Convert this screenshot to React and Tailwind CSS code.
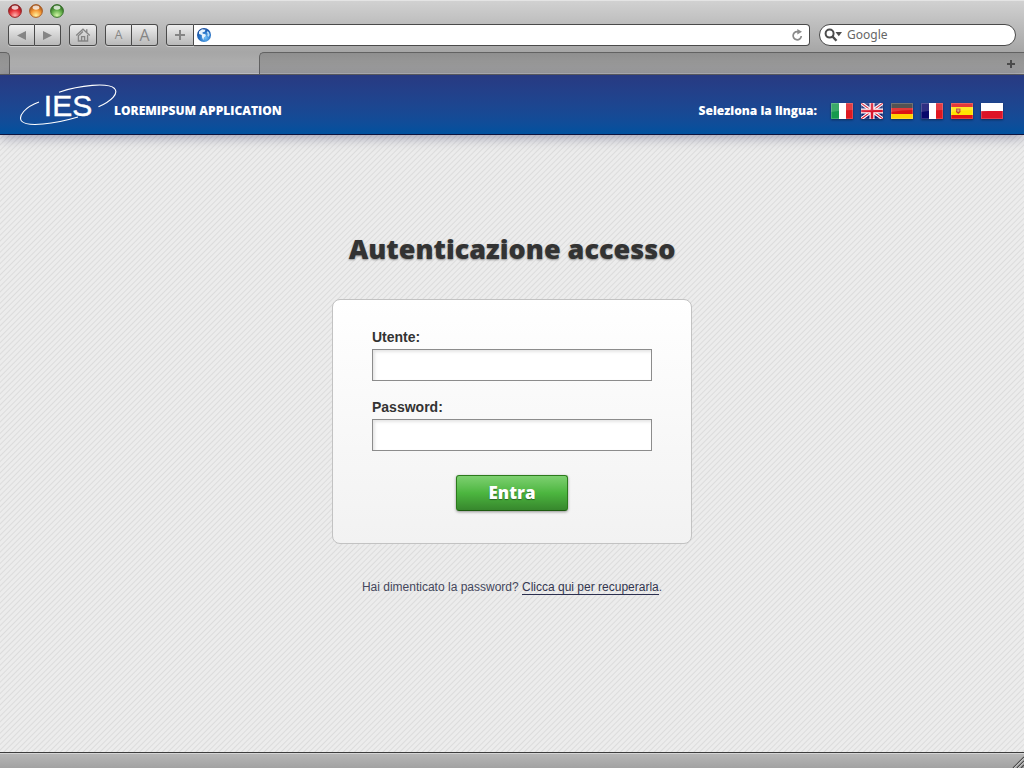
import React from "react";

const toolButton =
  "flex h-[22px] items-center justify-center border border-[#4a4a4a] bg-linear-to-b from-[#eeeeee] to-[#b9b9b9] text-[#858585] shadow-[0_1px_0_rgba(255,255,255,0.4)]";

function WindowButton({ label, id, dark, mid, light }) {
  return (
    <button type="button" aria-label={label} className="size-[14px]">
      <svg viewBox="0 0 14 14" className="size-[14px]">
        <defs>
          <radialGradient id={id} cx="0.5" cy="0.85" r="0.75">
            <stop offset="0" stopColor={light} />
            <stop offset="0.55" stopColor={mid} />
            <stop offset="1" stopColor={dark} />
          </radialGradient>
        </defs>
        <circle cx="7" cy="7" r="6.4" fill={`url(#${id})`} stroke={dark} strokeWidth="0.9" />
        <ellipse cx="7" cy="3.6" rx="3.4" ry="2.1" fill="#fff" opacity="0.75" />
      </svg>
    </button>
  );
}

function HomeIcon() {
  return (
    <svg viewBox="0 0 16 14" className="h-[14px] w-[16px]" fill="none" stroke="currentColor" strokeWidth="1.3">
      <path d="M1.2 7.4 8 1.2l6.8 6.2M11.8 4.2V1.2" />
      <path d="M3.4 7v6h9.2V7M8 3.6 4 7.3" />
      <path d="M6.6 13V8.7h3V13" />
    </svg>
  );
}

function Globe() {
  return (
    <svg viewBox="0 0 14 14" className="size-[14px] shrink-0">
      <defs>
        <radialGradient id="globe" cx="0.6" cy="0.7" r="0.7">
          <stop offset="0" stopColor="#6fc0fa" />
          <stop offset="0.6" stopColor="#2470c4" />
          <stop offset="1" stopColor="#1a4c9c" />
        </radialGradient>
      </defs>
      <circle cx="7" cy="7" r="7" fill="url(#globe)" />
      <path d="M2 3.5 5 1.2l3.5.6-.8 1.900-2.300.8.4 1.200 2.600.6.4 1.700-1.900 1.500-.6 2.700-1.300-2.900-.2-2.200L2 6z" fill="#e6f3fc" />
      <path d="M10.5 3 12 4.500l.7 2.500-1.300 2-1.100-1.600.4-1.700-1-1z" fill="#b5dcf8" />
    </svg>
  );
}

function Logo() {
  return (
    <svg viewBox="0 0 98 42" className="h-[42px] w-[98px] shrink-0" role="img" aria-label="IES">
      <g fill="none" stroke="#fff" strokeWidth="1.1">
        <path d="M39 8.2C60 1.200 88-1.800 94.500 4.500c4.500 5-3 12.500-16 18.300" />
        <path d="M19 18C5 23-2 32 1.500 37c5.500 6.500 33 3 56.500-4" />
      </g>
      <text x="48" y="32" textAnchor="middle" fill="#fff" stroke="#fff" strokeWidth="0.4" fontFamily="Liberation Sans, Arial, sans-serif" fontWeight="400" fontSize="30">
        IES
      </text>
    </svg>
  );
}

const flags = [
  ["Italiano", <><path fill="#169a4d" d="M0 0h8v16H0z" /><path fill="#fff" d="M8 0h7v16H8z" /><path fill="#dd1820" d="M15 0h7v16h-7z" /></>],
  ["English", <><path fill="#10206e" d="M0 0h22v16H0z" /><path d="m0 0 22 16M22 0 0 16" stroke="#fff" strokeWidth="3.4" /><path d="m0 0 22 16M22 0 0 16" stroke="#d8142c" strokeWidth="1.1" /><path d="M11 0v16M0 8h22" stroke="#fff" strokeWidth="5" /><path d="M11 0v16M0 8h22" stroke="#d8142c" strokeWidth="2.6" /></>],
  ["Deutsch", <><path fill="#333" d="M0 0h22v6H0z" /><path fill="#dd1414" d="M0 5h22v6H0z" /><path fill="#ffd400" d="M0 11h22v5H0z" /></>],
  ["Français", <><path fill="#08086c" d="M0 0h8v16H0z" /><path fill="#fff" d="M8 0h7v16H8z" /><path fill="#e0161e" d="M15 0h7v16h-7z" /></>],
  ["Español", <><path fill="#e01414" d="M0 0h22v16H0z" /><path fill="#ffe400" d="M0 4h22v8H0z" /><path fill="#c0392b" d="M5 5.5h4.5V9L7.2 11 5 9z" /><path fill="#c9a060" d="M6.3 6.5h2V9h-2z" /></>],
  ["Polski", <><path fill="#fff" d="M0 0h22v8H0z" /><path fill="#dd1428" d="M0 8h22v8H0z" /></>],
];

function Flag({ name, children }) {
  return (
    <button type="button" aria-label={name} className="h-4 w-[22px] shadow-[0_1px_2px_rgba(0,0,0,0.4)]">
      <svg viewBox="0 0 22 16" className="h-4 w-[22px]">
        {children}
        <path d="M0 0h22v7Q11 7 0 9z" fill="#fff" opacity="0.16" />
        <path d="M.5.5h21v15H.5z" fill="none" stroke="#fff" opacity="0.18" />
      </svg>
    </button>
  );
}

function Field({ id, label, type }) {
  return (
    <div className="flex flex-col gap-0.5">
      <label htmlFor={id} className="text-sm leading-5 font-bold text-[#333]">{label}</label>
      <input id={id} type={type} className="h-8 w-full border border-[#8c8c8c] bg-white px-2 text-sm shadow-[inset_2px_2px_3px_rgba(0,0,0,0.1)] outline-none" />
    </div>
  );
}

function BrowserToolbar() {
  return (
    <div className="bg-linear-to-b from-[#d2d2d2] to-[#a6a6a6] px-2 pt-1 pb-1.5 shadow-[inset_0_1px_0_#e4e4e4]">
      <div className="flex h-5 items-start gap-[7px]">
        <WindowButton label="Chiudi" id="red" dark="#8c1c1e" mid="#e8353b" light="#ffb5b0" />
        <WindowButton label="Riduci" id="amber" dark="#a5561c" mid="#f59a36" light="#fff3a0" />
        <WindowButton label="Ingrandisci" id="green" dark="#2f6b22" mid="#67b14d" light="#d5f7a8" />
      </div>
      <div className="flex items-center">
        <button type="button" aria-label="Indietro" className={`${toolButton} w-[27px] rounded-l-[3px]`}>
          <svg viewBox="0 0 9 9" className="size-[9px]"><path d="M0 4.5 9 0v9z" fill="currentColor" /></svg>
        </button>
        <button type="button" aria-label="Avanti" className={`${toolButton} w-[26px] rounded-r-[3px] border-l-0`}>
          <svg viewBox="0 0 9 9" className="size-[9px]"><path d="M9 4.5 0 0v9z" fill="currentColor" /></svg>
        </button>
        <button type="button" aria-label="Home" className={`${toolButton} ml-2 w-7 rounded-[3px]`}><HomeIcon /></button>
        <button type="button" aria-label="Testo più piccolo" className={`${toolButton} ml-2 w-[27px] rounded-l-[3px] font-[Open_Sans] text-xs`}>A</button>
        <button type="button" aria-label="Testo più grande" className={`${toolButton} w-[26px] rounded-r-[3px] border-l-0 font-[Open_Sans] text-base`}>A</button>
        <button type="button" aria-label="Aggiungi segnalibro" className={`${toolButton} ml-2 w-7 rounded-l-[3px]`}>
          <svg viewBox="0 0 12 12" className="size-3"><path d="M6 1v10M1 6h10" stroke="currentColor" strokeWidth="2" /></svg>
        </button>
        <div className="flex h-[22px] min-w-0 flex-1 items-center rounded-r-[4px] border border-l-0 border-[#4a4a4a] bg-white pr-1.5 pl-[3px]">
          <Globe />
          <input type="url" aria-label="Indirizzo" className="h-full min-w-0 flex-1 px-1 text-xs outline-none" />
          <button type="button" aria-label="Ricarica">
            <svg viewBox="0 0 12 12" className="size-3" fill="none" stroke="#8a8a8a" strokeWidth="1.7">
              <path d="M8 3A4.1 4.1 0 1 0 10.3 7" />
              <path d="M6.3 0v5.400L11 2.800z" fill="#8a8a8a" stroke="none" />
            </svg>
          </button>
        </div>
        <label className="ml-[9px] flex h-[22px] w-[197px] items-center gap-[5px] rounded-full border border-[#4a4a4a] bg-white pl-1">
          <svg viewBox="0 0 18 14" className="h-[14px] w-[18px] shrink-0" fill="none" stroke="#4c4c4c" strokeWidth="2">
            <circle cx="5.6" cy="5.6" r="4" />
            <path d="m8.500 8.500 4 4.300" strokeWidth="2.4" />
            <path d="M11.500 4H18l-3.200 4.300z" fill="#4c4c4c" stroke="none" />
          </svg>
          <input type="search" aria-label="Cerca" placeholder="Google" className="min-w-0 flex-1 bg-transparent font-[Noto_Sans] text-xs leading-5 text-[#666] outline-none placeholder:text-[#666]" />
        </label>
      </div>
    </div>
  );
}

function TabBar() {
  return (
    <div className="flex h-[23px] border-b border-[#5f5f5f] bg-linear-to-b from-[#a6a6a6] to-[#b4b4b4]">
      <div className="w-[10px] rounded-tr-[5px] border-t border-r border-[#626262] bg-linear-to-b from-[#8f8f8f] to-[#9c9c9c]" />
      <button type="button" aria-label="Scheda attiva" className="w-[249px] border-b border-[#cfcfcf]" />
      <div className="flex flex-1 items-center justify-end rounded-tl-[5px] border-t border-l border-[#626262] bg-linear-to-b from-[#8f8f8f] to-[#a0a0a0] pr-[9px] shadow-[inset_0_-1px_0_#b8b8b8]">
        <button type="button" aria-label="Nuova scheda">
          <svg viewBox="0 0 8 8" className="size-2"><path d="M4 0v8M0 4h8" stroke="#4c4c4c" strokeWidth="2" /></svg>
        </button>
      </div>
    </div>
  );
}

export default function App() {
  return (
    <div className="flex min-h-screen flex-col bg-[#e8e8e8] font-[Liberation_Sans,Arial,sans-serif]">
      <BrowserToolbar />
      <TabBar />
      <header className="z-10 flex h-[60px] items-center justify-between border-b border-[#0d1440] bg-linear-to-b from-[#283a82] to-[#00519e] pr-[21px] pl-5 font-[Open_Sans,sans-serif] font-extrabold text-white shadow-[0_2px_12px_rgba(30,30,80,0.4)]">
        <div className="flex items-center">
          <Logo />
          <span className="mt-3 -ml-1 text-xs leading-4">LOREMIPSUM APPLICATION</span>
        </div>
        <div className="mt-3 flex items-center gap-2">
          <span className="mr-1.5 text-xs leading-4">Seleziona la lingua:</span>
          {flags.map(([name, art]) => <Flag key={name} name={name}>{art}</Flag>)}
        </div>
      </header>
      <main className="flex flex-1 flex-col items-center bg-[repeating-linear-gradient(135deg,#ececec_0px,#ececec_2px,#dcdcdc_3px,#ececec_4px)] px-4 pt-24">
        <h1 className="font-[Open_Sans,sans-serif] text-[27px] leading-9 font-extrabold text-[#333] [text-shadow:0_1px_2px_rgba(0,0,0,0.4)]">Autenticazione accesso</h1>
        <form onSubmit={(e) => e.preventDefault()} className="mt-8 flex w-full max-w-[360px] flex-col gap-4 rounded-lg border border-[#c2c2c2] bg-linear-to-b from-white to-[#f2f2f2] px-[39px] pt-[27px] pb-8">
          <Field id="utente" label="Utente:" type="text" />
          <Field id="password" label="Password:" type="password" />
          <button type="submit" className="mt-2 h-9 w-28 self-center rounded-[3px] border border-[#2c7a1c] border-b-[#1d5a10] bg-linear-to-b from-[#7dd070] via-[#4cb63f] to-[#37872d] font-[Open_Sans,sans-serif] text-[17px] leading-6 font-extrabold text-white shadow-[0_1px_3px_rgba(0,0,0,0.4)] [text-shadow:0_1px_1px_rgba(0,0,0,0.4)]">Entra</button>
        </form>
        <p className="mt-8 text-xs leading-[22px] text-[#44475c]">
          Hai dimenticato la password? <a href="#recupera" className="border-b border-[#2c3050] text-[#33364f]">Clicca qui per recuperarla</a>.
        </p>
      </main>
      <footer className="flex h-4 items-end justify-end border-t border-[#3c3c3c] bg-linear-to-b from-[#b8b8b8] to-[#a2a2a2] shadow-[inset_0_1px_0_#d5d5d5]">
        <svg viewBox="0 0 12 12" className="size-3" strokeWidth="1.2">
          <path d="M1 12 12 1M5 12l7-7M9 12l3-3" stroke="#4a4a4a" />
          <path d="m2.200 12 9.800-9.800M6.200 12 12 6.200" stroke="#ddd" strokeWidth="0.8" />
        </svg>
      </footer>
    </div>
  );
}
